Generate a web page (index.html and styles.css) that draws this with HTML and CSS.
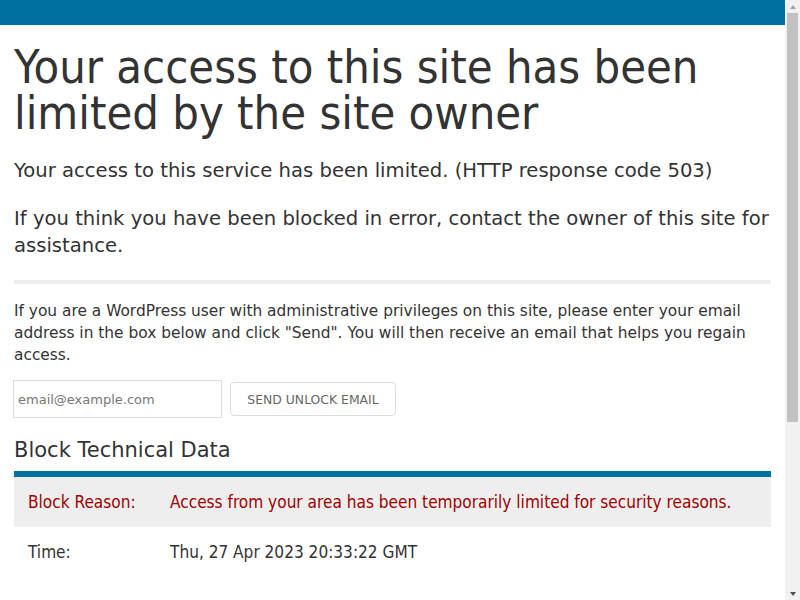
FILE: index.html
```html
<!DOCTYPE html>
<html>
<head>
<meta charset="utf-8">
<title>Access limited</title>
<link rel="stylesheet" href="styles.css">
</head>
<body>
<div class="page">
<div class="topbar"></div>
<main class="content">
  <h1 class="title">Your access to this site has been limited by the site owner</h1>
  <p class="lead">Your access to this service has been limited. (HTTP response code 503)</p>
  <p class="lead">If you think you have been blocked in error, contact the owner of this site for assistance.</p>
  <div class="rule"></div>
  <p class="text">If you are a WordPress user with administrative privileges on this site, please enter your email address in the box below and click "Send". You will then receive an email that helps you regain access.</p>
  <form class="unlock">
    <input class="email" type="email" placeholder="email@example.com">
    <button class="send" type="button">Send Unlock Email</button>
  </form>
  <h2 class="subtitle">Block Technical Data</h2>
  <table class="data">
    <tr class="alert">
      <th>Block Reason:</th>
      <td>Access from your area has been temporarily limited for security reasons.</td>
    </tr>
    <tr>
      <th>Time:</th>
      <td>Thu, 27 Apr 2023 20:33:22 GMT</td>
    </tr>
  </table>
</main>
</div>
<div class="scrollbar" aria-hidden="true">
  <div class="arrow up"></div>
  <div class="thumb"></div>
  <div class="track"></div>
  <div class="arrow down"></div>
</div>
</body>
</html>
```
FILE: styles.css
```css
html, body {
  margin: 0;
  padding: 0;
  height: 100%;
  overflow: hidden;
  background: #fff;
}
body {
  display: flex;
  font-family: "DejaVu Sans", sans-serif;
  color: #333;
}
.page {
  flex: 1;
  min-width: 0;
  height: 100vh;
  overflow: hidden;
}
.topbar {
  height: 25px;
  background: #00709e;
}
.content {
  padding: 0 14px;
}
.title {
  font-family: "DejaVu Sans Condensed", "DejaVu Sans", sans-serif;
  font-weight: normal;
  font-size: 46.7px;
  line-height: 46px;
  margin: 19px 0 0 0;
}
.lead {
  font-size: 19.6px;
  line-height: 27px;
  margin: 21px 0 0 0;
}
.rule {
  height: 4px;
  background: #eeeeee;
  margin: 21px 0 0 0;
}
.text {
  font-size: 15.4px;
  line-height: 22px;
  margin: 16px 0 0 0;
}
.unlock {
  display: flex;
  align-items: center;
  gap: 8px;
  margin: 14px 0 0 -1px;
}
.email {
  box-sizing: border-box;
  width: 209px;
  height: 38px;
  border: 1px solid #ddd;
  padding: 0 4px;
  font-family: "DejaVu Sans", sans-serif;
  font-size: 13px;
  color: #333;
  margin: 0;
}
.email::placeholder {
  color: #777;
}
.send {
  box-sizing: border-box;
  width: 166px;
  height: 34px;
  border: 1px solid #ddd;
  border-radius: 4px;
  background: #fff;
  color: #666;
  font-family: "DejaVu Sans", sans-serif;
  font-size: 12.4px;
  text-transform: uppercase;
  margin: 0;
}
.subtitle {
  font-weight: normal;
  font-size: 21px;
  line-height: 26px;
  margin: 19px 0 0 0;
}
.data {
  width: 100%;
  border-collapse: collapse;
  border-top: 6px solid #00709e;
  margin: 8px 0 0 0;
  font-family: "DejaVu Sans Condensed", "DejaVu Sans", sans-serif;
  font-size: 17.1px;
}
.data th, .data td {
  text-align: left;
  font-weight: normal;
  height: 50px;
  padding: 0 14px;
  vertical-align: middle;
}
.data th {
  width: 114px;
}
.alert {
  background: #eeeeee;
  color: #9e0000;
}
.scrollbar {
  width: 15px;
  height: 100vh;
  flex: none;
  background: #f1f1f1;
  display: flex;
  flex-direction: column;
  align-items: center;
}
.arrow {
  width: 15px;
  height: 13px;
  flex: none;
  display: flex;
  justify-content: center;
  align-items: center;
}
.arrow::before {
  content: "";
  width: 0;
  height: 0;
  border-left: 3.5px solid transparent;
  border-right: 3.5px solid transparent;
}
.up::before {
  border-bottom: 4px solid #a3a3a3;
}
.down::before {
  border-top: 4px solid #505050;
}
.thumb {
  width: 11px;
  height: 409px;
  flex: none;
  background: #c1c1c1;
}
.track {
  flex: 1;
}
```
